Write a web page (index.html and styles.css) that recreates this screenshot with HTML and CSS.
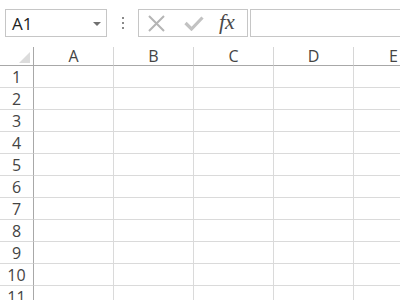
FILE: index.html
```html
<!DOCTYPE html>
<html>
<head>
<meta charset="utf-8">
<link rel="stylesheet" href="styles.css">
</head>
<body>
<div class="toolbar">
  <div class="namebox">
    <span class="name">A1</span>
    <span class="caret"></span>
  </div>
  <div class="dots"><i></i><i></i><i></i></div>
  <div class="buttons">
    <svg class="icon-x" width="17" height="17" viewBox="0 0 17 17"><path d="M1 1 L16 16 M16 1 L1 16" stroke="#b5b5b5" stroke-width="2" fill="none"/></svg>
    <svg class="icon-check" width="20" height="15" viewBox="0 0 20 15"><path d="M1.5 7 L7.5 13 L18.5 1.5" stroke="#c2c2c2" stroke-width="3.2" fill="none"/></svg>
    <span class="fx">fx</span>
  </div>
  <div class="formula"></div>
</div>
<div class="sheet">
  <div class="corner"><span class="tri"></span></div>
  <div class="ch">A</div><div class="ch">B</div><div class="ch">C</div><div class="ch">D</div><div class="ch">E</div>
  <div class="rh">1</div><div class="c"></div><div class="c"></div><div class="c"></div><div class="c"></div><div class="c"></div>
  <div class="rh">2</div><div class="c"></div><div class="c"></div><div class="c"></div><div class="c"></div><div class="c"></div>
  <div class="rh">3</div><div class="c"></div><div class="c"></div><div class="c"></div><div class="c"></div><div class="c"></div>
  <div class="rh">4</div><div class="c"></div><div class="c"></div><div class="c"></div><div class="c"></div><div class="c"></div>
  <div class="rh">5</div><div class="c"></div><div class="c"></div><div class="c"></div><div class="c"></div><div class="c"></div>
  <div class="rh">6</div><div class="c"></div><div class="c"></div><div class="c"></div><div class="c"></div><div class="c"></div>
  <div class="rh">7</div><div class="c"></div><div class="c"></div><div class="c"></div><div class="c"></div><div class="c"></div>
  <div class="rh">8</div><div class="c"></div><div class="c"></div><div class="c"></div><div class="c"></div><div class="c"></div>
  <div class="rh">9</div><div class="c"></div><div class="c"></div><div class="c"></div><div class="c"></div><div class="c"></div>
  <div class="rh">10</div><div class="c"></div><div class="c"></div><div class="c"></div><div class="c"></div><div class="c"></div>
  <div class="rh">11</div><div class="c"></div><div class="c"></div><div class="c"></div><div class="c"></div><div class="c"></div>
</div>
</body>
</html>
```
FILE: styles.css
```css
html, body {
  margin: 0;
  padding: 0;
  background: #ffffff;
  width: 400px;
  height: 300px;
  overflow: hidden;
  font-family: "Open Sans", "Noto Sans", sans-serif;
}
.toolbar {
  display: flex;
  align-items: flex-start;
  padding: 9px 0 0 5px;
  height: 28px;
  white-space: nowrap;
}
.namebox {
  box-sizing: border-box;
  width: 102px;
  height: 28px;
  border: 1px solid #c6c6c6;
  display: flex;
  align-items: center;
  justify-content: space-between;
  padding: 0 5px 0 6px;
  flex: none;
}
.name {
  font-size: 17px;
  color: #222;
  line-height: 1;
}
.caret {
  width: 0;
  height: 0;
  border-left: 4px solid transparent;
  border-right: 4px solid transparent;
  border-top: 4px solid #707070;
  margin-top: 1px;
}
.dots {
  width: 31px;
  height: 28px;
  display: flex;
  flex-direction: column;
  align-items: center;
  justify-content: center;
  gap: 3px;
  flex: none;
}
.dots i {
  display: block;
  width: 2px;
  height: 2px;
  background: #8a8a8a;
}
.buttons {
  box-sizing: border-box;
  width: 110px;
  height: 28px;
  border: 1px solid #c6c6c6;
  display: flex;
  align-items: center;
  padding-left: 9px;
  flex: none;
}
.icon-x { margin-top: 1px; }
.icon-check { margin-left: 19px; }
.fx {
  font-family: "Liberation Serif", "DejaVu Serif", serif;
  font-style: italic;
  font-size: 22px;
  color: #4a4a4a;
  margin-left: 15px;
  letter-spacing: 0;
  line-height: 1;
  margin-top: -2px;
}
.formula {
  box-sizing: border-box;
  height: 28px;
  border: 1px solid #c6c6c6;
  border-right: none;
  margin-left: 2px;
  flex: 1;
}
.sheet {
  margin-top: 10px;
  display: grid;
  grid-template-columns: 34px repeat(5, 80px);
  grid-template-rows: 19px repeat(11, 22px);
}
.sheet > div {
  box-sizing: border-box;
}
.corner {
  border-right: 1px solid #a8a8a8;
  border-bottom: 1px solid #a8a8a8;
  display: flex;
  justify-content: flex-end;
  align-items: flex-end;
  padding: 0 3px 2px 0;
}
.tri {
  width: 0;
  height: 0;
  border-left: 11px solid transparent;
  border-bottom: 11px solid #dcdcdc;
}
.ch {
  border-right: 1px solid #d6d6d6;
  border-bottom: 1px solid #a8a8a8;
  font-size: 16px;
  color: #444;
  text-align: center;
  line-height: 18px;
}
.rh {
  border-right: 1px solid #a8a8a8;
  border-bottom: 1px solid #dadada;
  font-size: 16px;
  color: #444;
  text-align: center;
  line-height: 22px;
}
.c {
  border-right: 1px solid #dadada;
  border-bottom: 1px solid #dadada;
}
```
